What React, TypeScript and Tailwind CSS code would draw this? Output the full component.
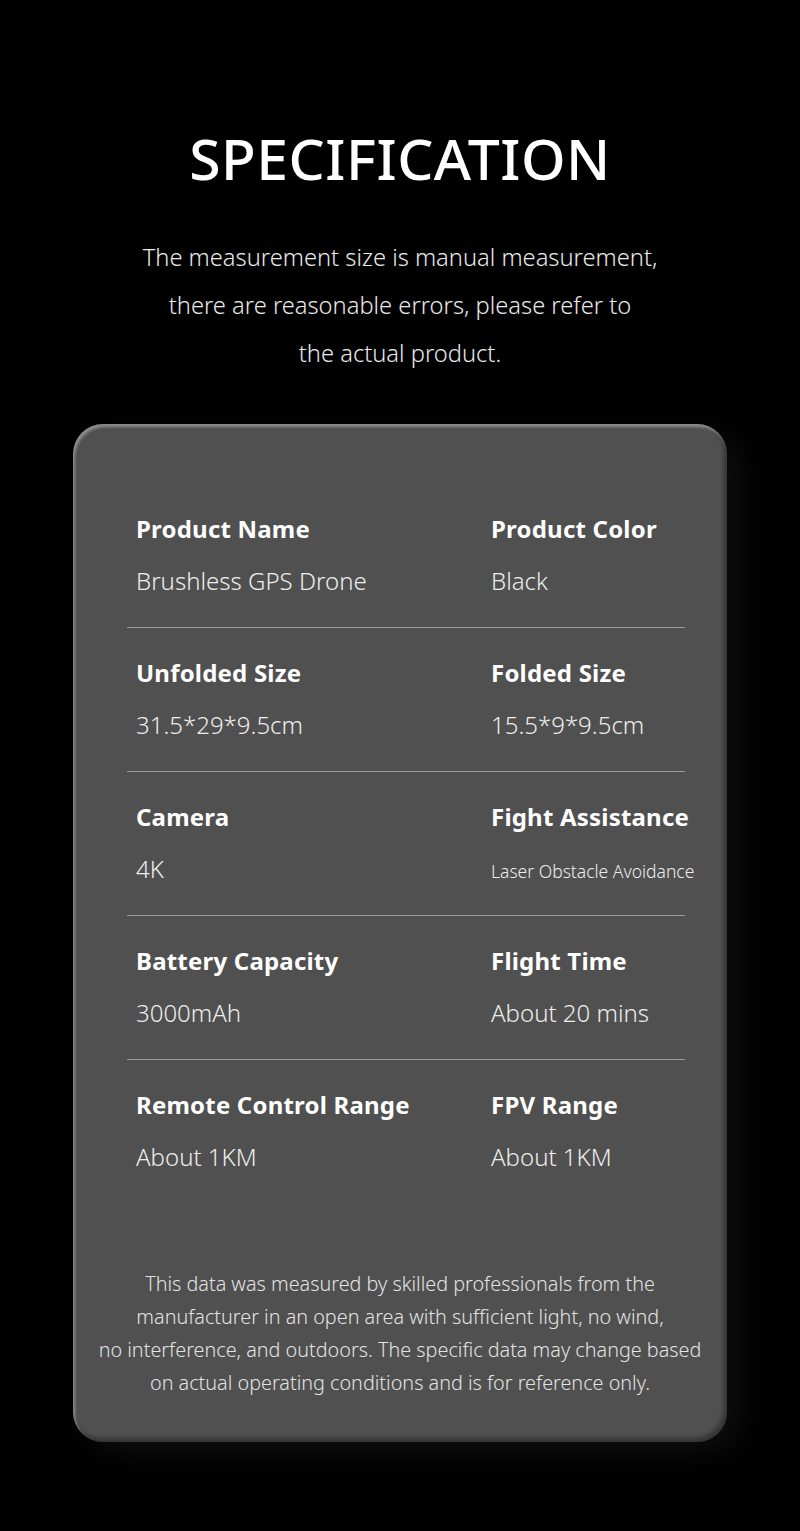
const specs: [string, string, string, string, boolean?][] = [
  ['Product Name', 'Brushless GPS Drone', 'Product Color', 'Black'],
  ['Unfolded Size', '31.5*29*9.5cm', 'Folded Size', '15.5*9*9.5cm'],
  ['Camera', '4K', 'Fight Assistance', 'Laser Obstacle Avoidance', true],
  ['Battery Capacity', '3000mAh', 'Flight Time', 'About 20 mins'],
  ['Remote Control Range', 'About 1KM', 'FPV Range', 'About 1KM'],
];

function SpecRow({ row, last }: { row: [string, string, string, string, boolean?]; last: boolean }) {
  const [l1, v1, l2, v2, small] = row;
  return (
    <div className={`grid grid-cols-[364px_1fr] pt-[29px] ${last ? '' : 'pb-[30px] border-b border-[#9c9c9c]'}`}>
      <div className="pl-[9px]">
        <div className="text-[24px] leading-[32px] font-bold text-white whitespace-nowrap tracking-[0.2px]">{l1}</div>
        <div className="mt-[20px] text-[24px] leading-[32px] font-light text-[#ececec]">{v1}</div>
      </div>
      <div>
        <div className="text-[24px] leading-[32px] font-bold text-white whitespace-nowrap tracking-[0.2px]">{l2}</div>
        <div
          className={`font-light text-[#ececec] whitespace-nowrap ${
            small ? 'mt-[25px] text-[17.5px] leading-[27px]' : 'mt-[20px] text-[24px] leading-[32px]'
          }`}
        >
          {v2}
        </div>
      </div>
    </div>
  );
}

export default function App() {
  return (
    <div
      className="w-[800px] h-[1531px] bg-black flex flex-col items-center pt-[122px]"
      style={{ fontFamily: '"Noto Sans", "Open Sans", sans-serif' }}
    >
      <h1 className="text-[57px] leading-[72px] font-medium text-white tracking-[0.5px]">SPECIFICATION</h1>

      <p className="mt-[39px] text-center text-[23.7px] leading-[48px] font-light text-[#e8e8e8]">
        The measurement size is manual measurement,
        <br />
        there are reasonable errors, please refer to
        <br />
        the actual product.
      </p>

      <div className="mt-[47px] w-[654px] rounded-[30px] bg-[#505050] pt-[60px] pb-[43px] shadow-[inset_2px_3px_3px_rgba(255,255,255,0.35),inset_-3px_-4px_4px_rgba(0,0,0,0.35),14px_10px_30px_rgba(40,40,40,0.35)]">
        <div className="ml-[54px] w-[558px]">
          {specs.map((row, i) => (
            <SpecRow key={row[0]} row={row} last={i === specs.length - 1} />
          ))}
        </div>

        <p className="mt-[94px] text-center text-[19.8px] leading-[33px] font-light text-[#e2e2e2]">
          This data was measured by skilled professionals from the
          <br />
          manufacturer in an open area with sufficient light, no wind,
          <br />
          no interference, and outdoors. The specific data may change based
          <br />
          on actual operating conditions and is for reference only.
        </p>
      </div>
    </div>
  );
}
